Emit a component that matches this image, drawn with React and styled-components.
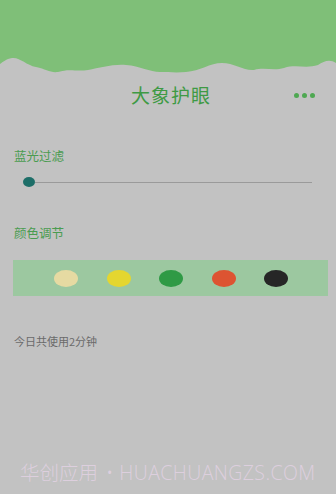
import React from "react";
import styled, { createGlobalStyle } from "styled-components";

const GlobalStyle = createGlobalStyle`
  html, body {
    margin: 0;
    padding: 0;
    background: #c2c2c2;
  }
  body {
    font-family: "Noto Sans CJK SC", "Noto Sans", sans-serif;
  }
`;

const Page = styled.div`
  position: relative;
  width: 336px;
  height: 494px;
  overflow: hidden;
  background: #c2c2c2;
`;

const Header = styled.div`
  height: 57px;
  background: #7fbf78;
`;

const Wave = styled.svg`
  display: block;
  width: 336px;
  height: 17px;
`;

const TitleBar = styled.div`
  display: flex;
  align-items: center;
  justify-content: center;
  position: relative;
  height: 30px;
  margin-top: 5px;
`;

const Title = styled.h1`
  margin: 0 0 0 6px;
  font-size: 19px;
  font-weight: 400;
  color: #3e9a44;
  letter-spacing: 1px;
`;

const More = styled.div`
  position: absolute;
  right: 21px;
  top: 14px;
  display: flex;
  gap: 3px;
`;

const Dot = styled.span`
  width: 5px;
  height: 5px;
  border-radius: 50%;
  background: #4ea852;
`;

const Section = styled.section`
  padding: 0 8px 0 14px;
`;

const Label = styled.div`
  font-size: 12.5px;
  color: #4a9c50;
  line-height: 16px;
  margin-top: ${(p) => p.top}px;
`;

const Slider = styled.div`
  display: flex;
  align-items: center;
  height: 12px;
  margin: 12px 16px 0 9px;
`;

const Thumb = styled.span`
  width: 12px;
  height: 10px;
  border-radius: 50%;
  background: #1d6e68;
  flex: none;
`;

const Track = styled.span`
  flex: 1;
  height: 1px;
  background: #9a9a9a;
`;

const Palette = styled.div`
  display: flex;
  align-items: center;
  gap: 28.5px;
  height: 36px;
  margin: 19px 0 0 -1px;
  padding-left: 41px;
  background: #9cc8a0;
`;

const Swatch = styled.span`
  width: 24px;
  height: 17px;
  border-radius: 50%;
  background: ${(p) => p.color};
`;

const Usage = styled.div`
  font-size: 11px;
  color: #6a6a6a;
  margin-top: 37px;
`;

const Watermark = styled.div`
  position: absolute;
  left: 20px;
  top: 457px;
  display: flex;
  align-items: baseline;
  font-family: "Open Sans", "Noto Sans CJK SC", sans-serif;
  font-weight: 300;
  font-size: 19.5px;
  color: #ddcfde;
  white-space: nowrap;
`;

const Bullet = styled.span`
  margin: 0 6px 0 8px;
`;

const Domain = styled.span`
  letter-spacing: 0.4px;
`;

const swatches = ["#e6daa2", "#e4d630", "#2f9a45", "#dd5432", "#262626"];

export default function App() {
  return (
    <Page>
      <GlobalStyle />
      <Header />
      <Wave viewBox="0 0 336 17" preserveAspectRatio="none">
        <path
          fill="#7fbf78"
          d="M0 0 L336 0 L336 6 C330 2 324 4 318 8 C306 12 296 7 284 11 C274 14 264 10 254 13 C244 14 234 6 222 6 C210 6 200 14 186 15 C176 16 168 15 160 15 C150 15 140 9 126 8 C112 7 100 11 88 13 C76 15 70 11 58 15 C50 16 46 12 36 10 C26 8 20 0 12 1 C6 2 3 5 0 7 Z"
        />
      </Wave>
      <TitleBar>
        <Title>大象护眼</Title>
        <More>
          <Dot />
          <Dot />
          <Dot />
        </More>
      </TitleBar>
      <Section>
        <Label top={39}>蓝光过滤</Label>
        <Slider>
          <Thumb />
          <Track />
        </Slider>
        <Label top={37}>颜色调节</Label>
        <Palette>
          {swatches.map((c) => (
            <Swatch key={c} color={c} />
          ))}
        </Palette>
        <Usage>今日共使用2分钟</Usage>
      </Section>
      <Watermark>
        <span>华创应用</span>
        <Bullet>•</Bullet>
        <Domain>HUACHUANGZS.COM</Domain>
      </Watermark>
    </Page>
  );
}
